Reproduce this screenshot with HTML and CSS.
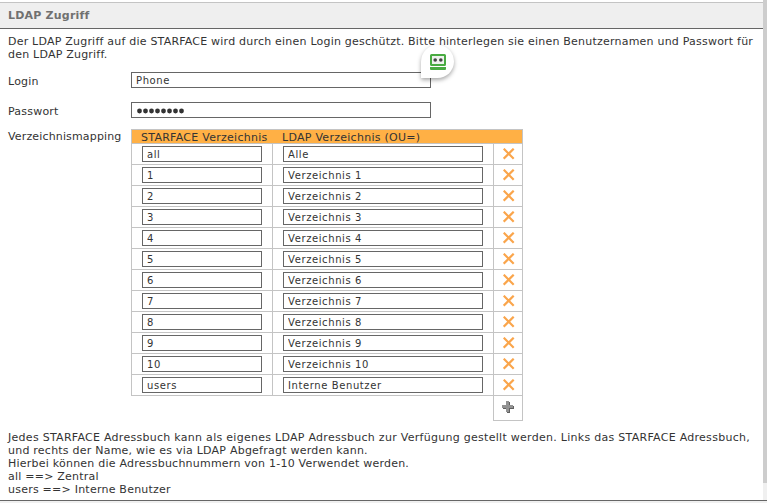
FILE: index.html
```
<!DOCTYPE html>
<html lang="de">
<head>
<meta charset="utf-8">
<title>LDAP Zugriff</title>
<link rel="stylesheet" href="styles.css">
</head>
<body>
<main class="page">
  <h1 class="title">LDAP Zugriff</h1>
  <section class="content">
    <p class="intro"><span class="l1">Der LDAP Zugriff auf die STARFACE wird durch einen Login geschützt. Bitte hinterlegen sie einen Benutzernamen und Passwort für</span><br><span class="l2">den LDAP Zugriff.</span></p>
    <div class="row"><label for="login">Login</label>
      <div class="login"><input id="login" value="Phone">
        <div class="bubble"><svg width="16" height="16" viewBox="0 0 16 16"><rect x="1" y="1" width="14" height="10" rx=".5" fill="#eef2ee" stroke="#49ab42" stroke-width="2"/><path d="M0 13h16v2q0 1-1 1H1q-1 0-1-1z" fill="#49ab42"/><circle cx="5.2" cy="6" r="1.8" fill="#444"/><circle cx="10.8" cy="6" r="1.8" fill="#444"/></svg></div>
      </div>
    </div>
    <div class="row"><label>Passwort</label>
      <div class="login dots"><svg width="48" height="6" viewBox="0 0 48 6"><path d="M2.5 3h.01M8.5 3h.01M14.5 3h.01M20.5 3h.01M26.5 3h.01M32.5 3h.01M38.5 3h.01M44.5 3h.01" stroke="#333" stroke-width="4.8" stroke-linecap="round"/></svg></div>
    </div>
    <div class="mapping"><span class="maplabel">Verzeichnismapping</span>
      <div class="table" id="table">
        <div class="thead"><span class="h1">STARFACE Verzeichnis</span><span class="h2">LDAP Verzeichnis (OU=)</span></div>
      </div>
    </div>
    <p class="notes"><span class="n1">Jedes STARFACE Adressbuch kann als eigenes LDAP Adressbuch zur Verfügung gestellt werden. Links das STARFACE Adressbuch,</span><br><span class="n2">und rechts der Name, wie es via LDAP Abgefragt werden kann.</span><br><span class="n3">Hierbei können die Adressbuchnummern von 1-10 Verwendet werden.</span><br><span class="n4">all ==&gt; Zentral</span><br><span class="n5">users ==&gt; Interne Benutzer</span></p>
  </section>
  <div class="scroll"><div class="thumb"></div></div>
</main>
<script src="table.js"></script>
</body>
</html>
```
FILE: styles.css
```
* { box-sizing: border-box; }
body { margin: 0; background: #f0f0f0; color: #333; font: 11px/13px "DejaVu Sans", sans-serif; letter-spacing: .215px; overflow: hidden; }
p { margin: 0; white-space: nowrap; }
.page { position: relative; height: 501px; background: #fff; border-bottom: 1px solid #666; padding-top: 2px; }
.title { margin: 0 4px 0 0; height: 27px; padding: 0 8px; border-top: 1px solid #c4c4c4; border-bottom: 1px solid #666; background: #efefef; color: #707070; font-size: 11px; line-height: 26px; }
.content { padding: 6px 8px 0; }
.row { display: flex; height: 30px; }
.intro + .row { margin-top: 11px; }
.row label { width: 123px; padding-top: 3px; }
input { display: block; height: 16px; margin: 0; padding: 1px 4px 0; border: 1px solid #666; border-radius: 0; background: #fff; color: #333; font: 10px/13px "DejaVu Sans", sans-serif; letter-spacing: .6px; outline: 0; }
.login { position: relative; width: 300px; height: 16px; }
.login input { width: 300px; }
.dots { padding: 5px 0 0 5px; border: 1px solid #666; }
.dots svg { display: block; }
.bubble { position: absolute; left: 290px; top: -27px; width: 33px; height: 33px; padding: 9px; border-radius: 50% 50% 50% 0; background: #fff; box-shadow: 0 2px 4px rgba(0,0,0,.35); }
.bubble svg { display: block; }
.mapping { display: flex; margin-top: -3px; height: 292px; }
.maplabel { width: 123px; padding-top: 1px; white-space: nowrap; letter-spacing: .15px; }
.table { width: 392px; }
.thead { display: grid; grid-template-columns: 141px 1fr; height: 15px; border: 1px solid #c4c4c4; background: #ffb045; line-height: 15px; padding-left: 9px; white-space: nowrap; letter-spacing: .27px; }
.entry { display: grid; grid-template-columns: 141px 221px 29px; height: 21px; border: solid #c4c4c4; border-width: 0 0 1px 1px; }
.cell { border-right: 1px solid #c4c4c4; padding: 2px 0 0 10px; }
.cell.last { padding: 4px 0 0 9px; }
.key { width: 120px; }
.value { width: 200px; }
.cell svg, .add svg { display: block; }
.add { width: 30px; height: 25px; margin-left: auto; border: solid #c4c4c4; border-width: 0 1px 1px; padding: 5px 0 0 8px; }
.notes { margin-top: 10px; letter-spacing: .23px; }
.n1 { letter-spacing: .28px; }
.scroll { position: absolute; right: 0; top: 0; width: 4px; height: 500px; background: #f0f0f0; }
.thumb { height: 483px; background: #cdcdcd; }
```
FILE: table.js
```
const table = document.getElementById("table");
const entries = [["all", "Alle"]];
for (let i = 1; i <= 10; i++) entries.push([String(i), "Verzeichnis " + i]);
entries.push(["users", "Interne Benutzer"]);
for (const [key, value] of entries) {
  table.insertAdjacentHTML("beforeend", `<div class="entry"><div class="cell"><input class="key" value="${key}"></div><div class="cell"><input class="value" value="${value}"></div><div class="cell last"><svg width="12" height="12" viewBox="0 0 12 12"><path d="M.7 .7l10 10M10.7 .7L.7 10.7" stroke="#faa54b" stroke-width="2.2"/></svg></div></div>`);
}
table.insertAdjacentHTML("beforeend", `<div class="add"><svg width="12" height="12" viewBox="0 0 12 12"><path d="M5 1h3v4h4v3H8v4H5V8H1V5h4z" fill="#606060"/><path d="M4 0h3v4h4v3H7v4H4V7H0V4h4z" fill="#929292"/></svg></div>`);
```
